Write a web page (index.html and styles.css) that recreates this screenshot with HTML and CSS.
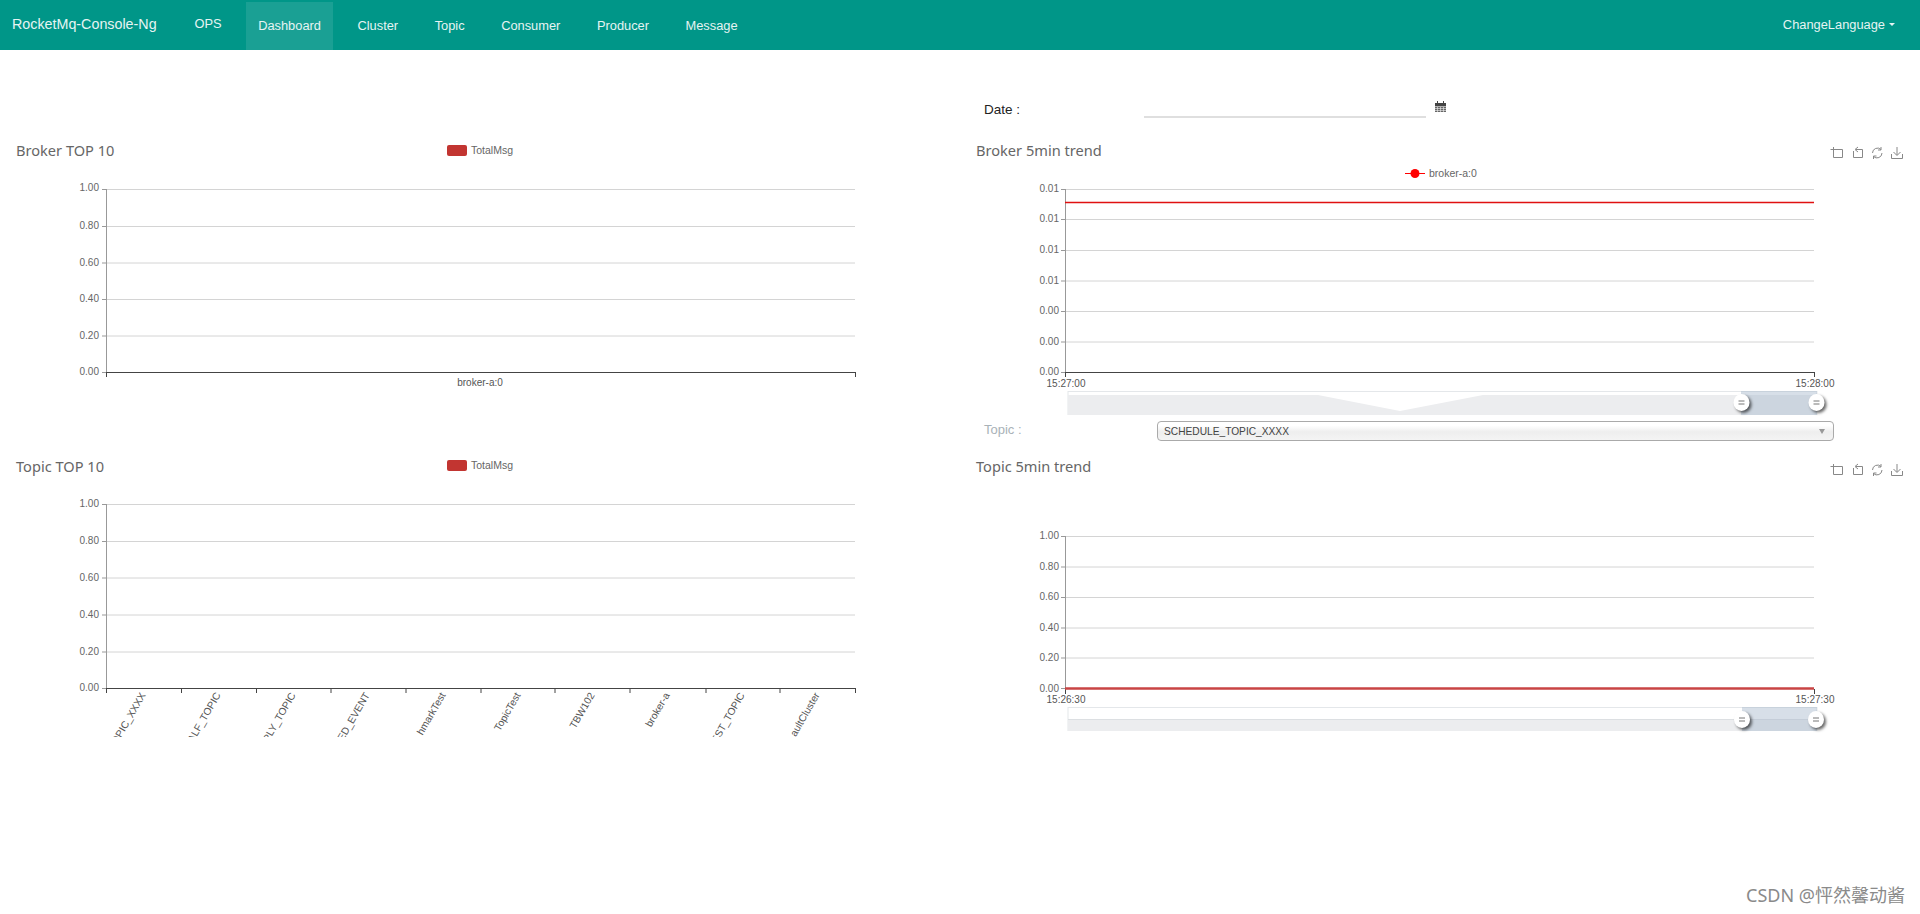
FILE: index.html
```html
<!DOCTYPE html>
<html lang="en">
<head>
<meta charset="utf-8">
<title>RocketMq-Console-Ng</title>
<link rel="stylesheet" href="styles.css">
</head>
<body>
<nav class="navbar">
  <a class="brand">RocketMq-Console-Ng</a>
  <a class="nav-item ops">OPS</a>
  <a class="nav-item active">Dashboard</a>
  <a class="nav-item">Cluster</a>
  <a class="nav-item">Topic</a>
  <a class="nav-item">Consumer</a>
  <a class="nav-item">Producer</a>
  <a class="nav-item">Message</a>
  <a class="lang">ChangeLanguage<span class="caret"></span></a>
</nav>
<main class="columns">
  <section class="col col-left">
    <svg class="chart chart-a" viewBox="0 135 960 310">
      <text class="title" x="16" y="156">Broker TOP 10</text>
      <rect class="legend-box" x="447" y="145" width="20" height="11" rx="2"/>
      <text class="legend" x="471" y="153.500">TotalMsg</text>
      <g class="grid">
        <path d="M106 189.500H855M106 226.500H855M106 263H855M106 299.500H855M106 336H855"/>
      </g>
      <path class="axis-y" d="M106.500 189V372M102 189.500H106M102 226.500H106M102 263H106M102 299.500H106M102 336H106M102 372.500H106"/>
      <path class="axis-x" d="M106 372.500H855M106.500 372V377M855.500 372V377"/>
      <g class="ylabels">
        <text x="99" y="191">1.00</text><text x="99" y="229">0.80</text><text x="99" y="266">0.60</text><text x="99" y="302">0.40</text><text x="99" y="339">0.20</text><text x="99" y="375">0.00</text>
      </g>
      <text class="xlabel" x="480" y="386">broker-a:0</text>
    </svg>
    <svg class="chart chart-b" viewBox="0 445 960 469">
      <defs>
        <clipPath id="label-clip"><rect x="100" y="690" width="760" height="47"/></clipPath>
      </defs>
      <text class="title" x="16" y="472">Topic TOP 10</text>
      <rect class="legend-box" x="447" y="460" width="20" height="11" rx="2"/>
      <text class="legend" x="471" y="469">TotalMsg</text>
      <g class="grid">
        <path d="M106 504.500H855M106 541.500H855M106 578H855M106 615H855M106 652H855"/>
      </g>
      <path class="axis-y" d="M106.500 504V688M102 504.500H106M102 541.500H106M102 578H106M102 615H106M102 652H106M102 688.500H106"/>
      <path class="axis-x" d="M106 688.500H855M106.500 688V693M181.500 688V693M256.500 688V693M331 688V693M406 688V693M481 688V693M555 688V693M630 688V693M706 688V693M780 688V693M855.500 688V693"/>
      <g class="ylabels">
        <text x="99" y="507">1.00</text><text x="99" y="544">0.80</text><text x="99" y="581">0.60</text><text x="99" y="618">0.40</text><text x="99" y="655">0.20</text><text x="99" y="691">0.00</text>
      </g>
      <g class="rotlabels" clip-path="url(#label-clip)">
        <text transform="translate(146 695) rotate(-60)">OPIC_XXXX</text>
        <text transform="translate(221 695) rotate(-60)">ALF_TOPIC</text>
        <text transform="translate(296 695) rotate(-60)">PLY_TOPIC</text>
        <text transform="translate(370 695) rotate(-60)">ED_EVENT</text>
        <text transform="translate(446 695) rotate(-60)">hmarkTest</text>
        <text transform="translate(521 695) rotate(-60)">TopicTest</text>
        <text transform="translate(595 695) rotate(-60)">TBW102</text>
        <text transform="translate(670 695) rotate(-60)">broker-a</text>
        <text transform="translate(745 695) rotate(-60)">EST_TOPIC</text>
        <text transform="translate(820 695) rotate(-60)">aultCluster</text>
      </g>
    </svg>
  </section>
  <section class="col col-right">
    <div class="date-row">
      <label class="date-label">Date :</label>
      <div class="date-input"></div>
      <svg class="cal" viewBox="0 0 11 11">
        <path class="cal-top" d="M0 2H2V0H3V2H8V0H9V2H11V5H0Z"/>
        <path class="cal-body" d="M0 5.500H11V11H0Z"/>
        <path class="cal-grid" d="M0 7.500H11M0 9.500H11M2.500 6V11M5.500 6V11M8.500 6V11"/>
      </svg>
    </div>
    <svg class="chart chart-c" viewBox="960 135 960 286">
      <text class="title" x="976" y="156">Broker 5min trend</text>
      <g class="tools">
        <path d="M1833.500 147V157.500H1842.500V149.500H1830.500"/>
        <path d="M1853.500 151V157.500H1862.500V149.500H1856M1858 147L1855 149.500L1858 152"/>
        <path d="M1872.500 153A5 5 0 0 1 1881 149.500M1882 153A5 5 0 0 1 1873.500 156.500M1881 147V150H1878M1873.500 159V156H1876.500"/>
        <path d="M1897 147V155M1893.500 152L1897 155.500L1900.500 152M1891.500 154V158.500H1902.500V154"/>
      </g>
      <path class="leg-line" d="M1405 173.500H1425"/>
      <circle class="leg-dot" cx="1415" cy="173.500" r="4.500"/>
      <text class="legend" x="1429" y="176.500">broker-a:0</text>
      <path class="grid-path" d="M1065 189.500H1814M1065 219.500H1814M1065 250.500H1814M1065 281H1814M1065 311.500H1814M1065 342H1814"/>
      <path class="axis-y" d="M1065.500 189V372M1061 189.500H1065M1061 219.500H1065M1061 250.500H1065M1061 281H1065M1061 311.500H1065M1061 342H1065M1061 372.500H1065"/>
      <path class="axis-x" d="M1065 372.500H1814M1065.500 372V377M1814.500 372V377"/>
      <path class="series-red" d="M1065 202.500H1814"/>
      <g class="ylabels">
        <text x="1059" y="191.500">0.01</text><text x="1059" y="222">0.01</text><text x="1059" y="253">0.01</text><text x="1059" y="284">0.01</text><text x="1059" y="314">0.00</text><text x="1059" y="345">0.00</text><text x="1059" y="375">0.00</text>
      </g>
      <text class="xlabel" x="1066" y="387">15:27:00</text>
      <text class="xlabel" x="1815" y="387">15:28:00</text>
      <rect class="sl-bg" x="1068" y="391.500" width="749" height="23"/>
      <path class="sl-area" d="M1068 395H1318L1400 411L1483 395H1817V415H1068Z"/>
      <rect class="sl-sel" x="1741" y="391" width="76" height="24"/>
      <g class="handle" transform="translate(1741.500 403)"><path class="h-body" d="M0 -9A8 8.500 0 1 1 0 8A8 8.500 0 1 1 0 -9Z"/><path class="h-mark" d="M-3 -2H3M-3 1H3"/></g>
      <g class="handle" transform="translate(1816.500 403)"><path class="h-body" d="M0 -9A8 8.500 0 1 1 0 8A8 8.500 0 1 1 0 -9Z"/><path class="h-mark" d="M-3 -2H3M-3 1H3"/></g>
    </svg>
    <div class="topic-row">
      <label class="topic-label">Topic :</label>
      <div class="select"><span class="select-text">SCHEDULE_TOPIC_XXXX</span><span class="select-arrow"></span></div>
    </div>
    <svg class="chart chart-d" viewBox="960 445 960 469">
      <text class="title" x="976" y="472">Topic 5min trend</text>
      <g class="tools">
        <path d="M1833.500 464V474.500H1842.500V466.500H1830.500"/>
        <path d="M1853.500 468V474.500H1862.500V466.500H1856M1858 464L1855 466.500L1858 469"/>
        <path d="M1872.500 470A5 5 0 0 1 1881 466.500M1882 470A5 5 0 0 1 1873.500 473.500M1881 464V467H1878M1873.500 476V473H1876.500"/>
        <path d="M1897 464V472M1893.500 469L1897 472.500L1900.500 469M1891.500 471V475.500H1902.500V471"/>
      </g>
      <path class="grid-path" d="M1065 536.500H1814M1065 567H1814M1065 597.500H1814M1065 628H1814M1065 658H1814"/>
      <path class="axis-y" d="M1065.500 536V689M1061 536.500H1065M1061 567H1065M1061 597.500H1065M1061 628H1065M1061 658H1065M1061 688.500H1065"/>
      <path class="axis-x" d="M1814.500 689V694M1065.500 689V694"/>
      <path class="series-dark" d="M1065 688.500H1814"/>
      <g class="ylabels">
        <text x="1059" y="539">1.00</text><text x="1059" y="570">0.80</text><text x="1059" y="600">0.60</text><text x="1059" y="631">0.40</text><text x="1059" y="661">0.20</text><text x="1059" y="691.500">0.00</text>
      </g>
      <text class="xlabel" x="1066" y="703">15:26:30</text>
      <text class="xlabel" x="1815" y="703">15:27:30</text>
      <rect class="sl-bg" x="1068" y="707.500" width="749" height="23"/>
      <rect class="sl-area" x="1068" y="719.500" width="749" height="11.500"/>
      <path class="sl-line" d="M1068 719.500H1817"/>
      <rect class="sl-sel" x="1742" y="707" width="75" height="24"/>
      <g class="handle" transform="translate(1742 720)"><path class="h-body" d="M0 -9A8 8.500 0 1 1 0 8A8 8.500 0 1 1 0 -9Z"/><path class="h-mark" d="M-3 -2H3M-3 1H3"/></g>
      <g class="handle" transform="translate(1816 720)"><path class="h-body" d="M0 -9A8 8.500 0 1 1 0 8A8 8.500 0 1 1 0 -9Z"/><path class="h-mark" d="M-3 -2H3M-3 1H3"/></g>
    </svg>
  </section>
</main>
<div class="watermark">CSDN @怦然馨动酱</div>
</body>
</html>
```
FILE: styles.css
```css
html, body { margin: 0; padding: 0; }
body {
  position: relative;
  height: 914px;
  overflow: hidden;
  background: #fff;
  font-family: "Liberation Sans", Arial, sans-serif;
  color: #333;
}
.navbar {
  display: flex;
  align-items: stretch;
  height: 50px;
  background: #009688;
  color: #e6f4f3;
  font-size: 12.850px;
}
.brand {
  font-size: 14.300px;
  line-height: 49px;
  padding-left: 12px;
  width: 170px;
}
.nav-item {
  margin: 2px 11.500px 0 0;
  padding: 0 12.500px;
  line-height: 48px;
}
.nav-item.ops { line-height: 44px; }
.nav-item.active { background: #1aa094; }
.lang {
  margin-left: auto;
  padding-right: 35px;
  line-height: 49px;
  position: relative;
}
.caret {
  position: absolute;
  right: 25px;
  top: 23px;
  border: 3px solid transparent;
  border-top-color: #e6f4f3;
  border-bottom: 0;
}
.columns {
  display: grid;
  grid-template-columns: 960px 960px;
}
.col { display: flex; flex-direction: column; }
.col-left { padding-top: 85px; }
.chart { display: block; width: 960px; }
.chart-a { height: 310px; }
.chart-b { height: 469px; }
.chart-c { height: 286px; }
.chart-d { height: 469px; }
.date-row {
  display: flex;
  align-items: flex-start;
  height: 85px;
  padding-left: 24px;
}
.date-label {
  width: 160px;
  margin-top: 50px;
  font-size: 13.500px;
  line-height: 20px;
  color: #222;
}
.date-input {
  width: 282px;
  height: 2px;
  margin-top: 66px;
  background: #dfdfdf;
}
.cal { width: 11px; height: 11px; margin: 51px 0 0 9px; }
.cal-top { fill: #444; }
.cal-body { fill: #666; }
.cal-grid { stroke: #eee; stroke-width: 0.600; fill: none; }
.topic-row {
  display: flex;
  align-items: flex-start;
  height: 24px;
  padding-left: 24px;
}
.topic-label {
  width: 173px;
  font-size: 13px;
  line-height: 18px;
  color: #a9b2b8;
}
.select {
  display: flex;
  align-items: center;
  justify-content: space-between;
  box-sizing: border-box;
  width: 677px;
  height: 20px;
  padding: 0 8px 0 6px;
  border: 1px solid #aaa;
  border-radius: 4px;
  background: linear-gradient(#fff 20%, #eee 55%, #f4f4f4);
}
.select-text { font-size: 10.200px; color: #444; }
.select-arrow {
  border: 3px solid transparent;
  border-top: 5px solid #999;
  border-bottom: 0;
}
.title {
  font-family: "Noto Sans", sans-serif;
  font-size: 14.600px;
  fill: #666;
}
.legend-box { fill: #c23531; }
.legend { font-size: 10.500px; fill: #666; }
.grid path, .grid-path { stroke: #d4d4d4; fill: none; stroke-width: 1; }
.axis-y { stroke: #999; fill: none; stroke-width: 1; }
.axis-x { stroke: #444; fill: none; stroke-width: 1; }
.ylabels text { font-size: 10px; fill: #666; text-anchor: end; }
.xlabel { font-size: 10px; fill: #555; text-anchor: middle; }
.rotlabels text { font-size: 10.200px; fill: #555; text-anchor: end; }
.tools path { stroke: #888; fill: none; stroke-width: 1; }
.leg-line { stroke: #f00; stroke-width: 1; }
.leg-dot { fill: #f00; }
.series-red { stroke: #e01010; stroke-width: 1.500; }
.series-dark { stroke: #c94444; stroke-width: 2.500; }
.sl-bg { fill: #fff; stroke: #e4e7ea; }
.sl-area { fill: #ecedef; stroke: none; }
.sl-line { stroke: #dcdfe2; fill: none; }
.sl-sel { fill: rgba(167, 183, 204, 0.45); }
.handle { filter: drop-shadow(2px 2px 1.500px rgba(0, 0, 0, 0.6)); }
.h-body { fill: #fff; }
.h-mark { stroke: #777; stroke-width: 1; fill: none; }
.watermark {
  position: absolute;
  right: 15px;
  top: 882px;
  font-family: "Noto Sans", "Noto Sans CJK SC", sans-serif;
  font-size: 18px;
  line-height: 26px;
  color: #8a8a8a;
}
```
